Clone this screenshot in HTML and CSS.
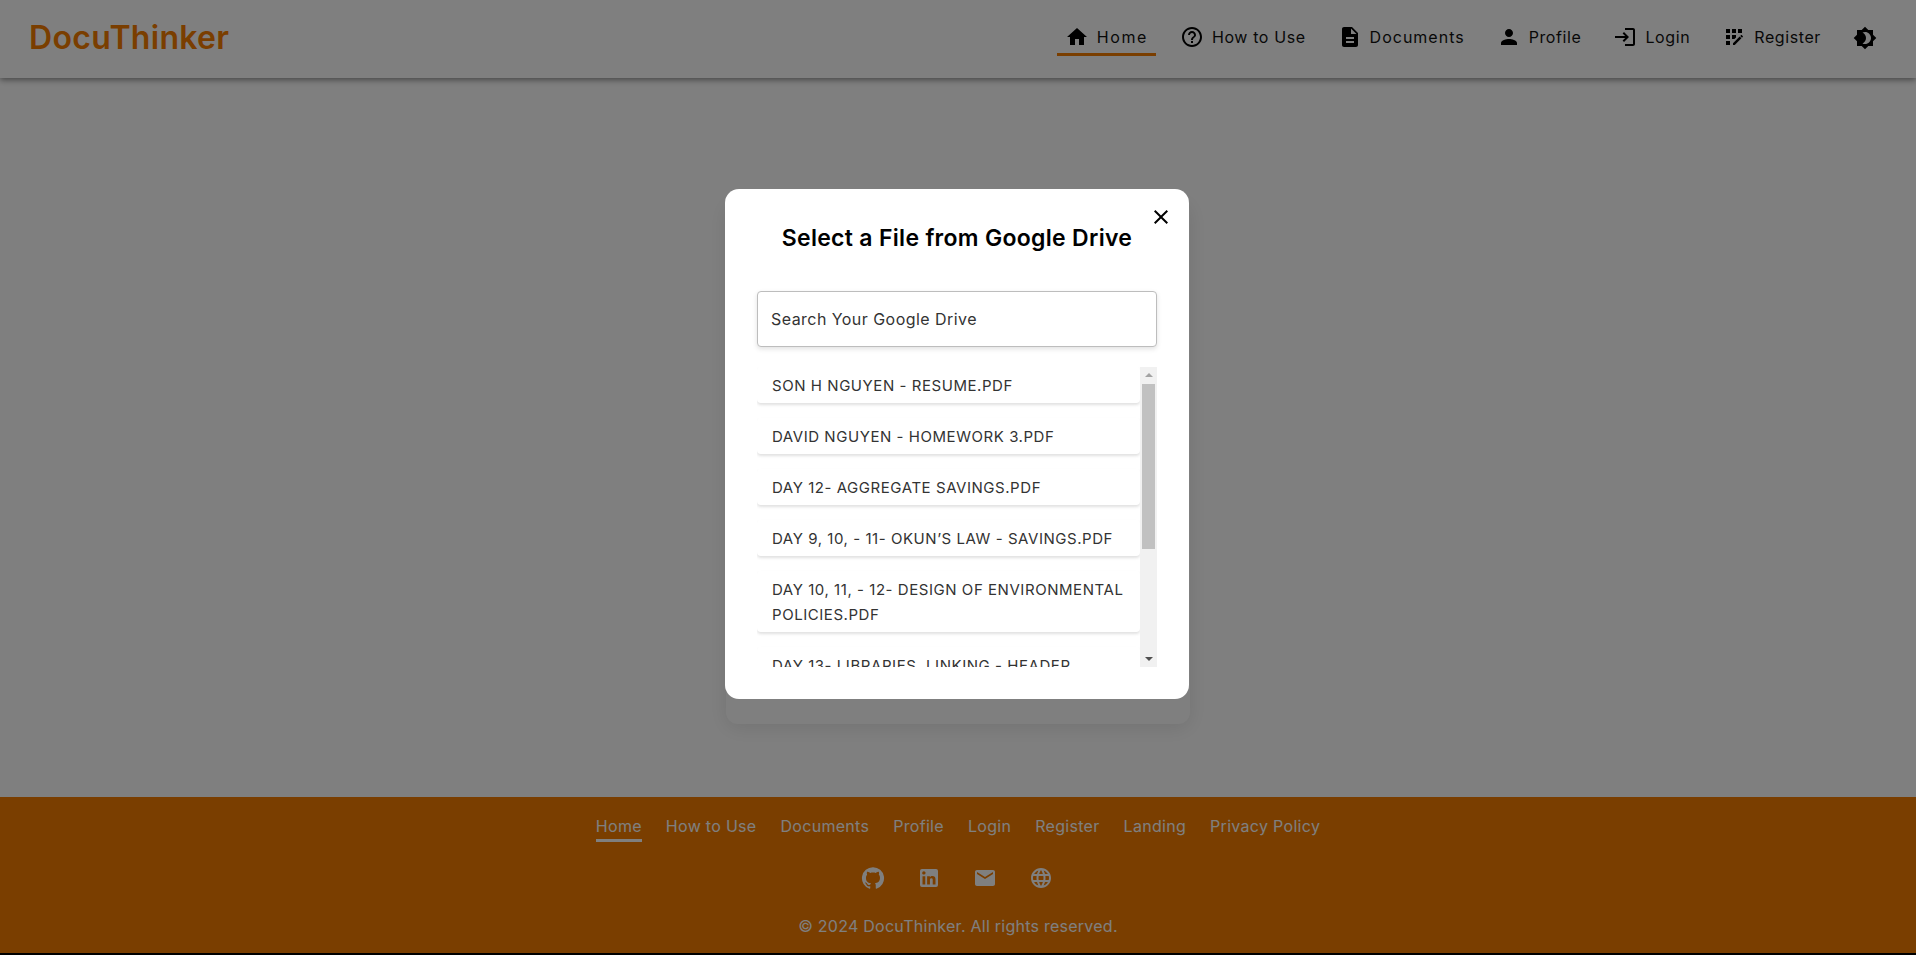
FILE: index.html
```html
<!DOCTYPE html>
<html lang="en">
<head>
    <meta charset="UTF-8">
    <title>DocuThinker</title>
    <link rel="stylesheet" href="styles.css">
</head>
<body>
    <div class="page">
        <header class="navbar">
            <div class="logo">DocuThinker</div>
            <nav class="nav-links">
                <a class="nav-item active"><svg viewBox="0 0 24 24"><path d="M10 20v-6h4v6h5v-8h3L12 3 2 12h3v8z"/></svg><span>Home</span></a>
                <a class="nav-item"><svg viewBox="0 0 24 24"><path d="M11 18h2v-2h-2v2zm1-16C6.48 2 2 6.48 2 12s4.48 10 10 10 10-4.48 10-10S17.52 2 12 2zm0 18c-4.41 0-8-3.59-8-8s3.59-8 8-8 8 3.59 8 8-3.59 8-8 8zm0-14c-2.21 0-4 1.79-4 4h2c0-1.1.9-2 2-2s2 .9 2 2c0 2-3 1.75-3 5h2c0-2.25 3-2.5 3-5 0-2.21-1.79-4-4-4z"/></svg><span>How to Use</span></a>
                <a class="nav-item wide"><svg viewBox="0 0 24 24"><path d="M14 2H6c-1.1 0-1.99.9-1.99 2L4 20c0 1.1.89 2 1.99 2H18c1.1 0 2-.9 2-2V8l-6-6zm2 16H8v-2h8v2zm0-4H8v-2h8v2zm-3-5V3.5L18.5 9H13z"/></svg><span>Documents</span></a>
                <a class="nav-item"><svg viewBox="0 0 24 24"><path d="M12 12c2.21 0 4-1.79 4-4s-1.79-4-4-4-4 1.79-4 4 1.79 4 4 4zm0 2c-2.67 0-8 1.34-8 4v2h16v-2c0-2.66-5.33-4-8-4z"/></svg><span>Profile</span></a>
                <a class="nav-item"><svg viewBox="0 0 24 24"><path d="M11 7 9.6 8.4l2.6 2.6H2v2h10.2l-2.6 2.6L11 17l5-5-5-5zm9 12h-8v2h8c1.1 0 2-.9 2-2V5c0-1.1-.9-2-2-2h-8v2h8v14z"/></svg><span>Login</span></a>
                <a class="nav-item"><svg viewBox="0 0 24 24"><path d="M10 4h4v4h-4zM4 16h4v4H4zm0-6h4v4H4zm0-6h4v4H4zm10 8.42V10h-4v4h2.42zm6.88-1.13-1.17-1.17c-.16-.16-.42-.16-.58 0l-.88.88L20 12.75l.88-.88c.16-.16.16-.42 0-.58zM11 18.25V20h1.75l6.67-6.67-1.75-1.75zM16 4h4v4h-4z"/></svg><span>Register</span></a>
                <a class="theme-toggle"><svg viewBox="0 0 24 24"><path d="M20 8.69V4h-4.69L12 .69 8.69 4H4v4.69L.69 12 4 15.31V20h4.69L12 23.31 15.31 20H20v-4.69L23.31 12 20 8.69zM12 18c-.89 0-1.74-.2-2.5-.55C11.56 16.5 13 14.42 13 12s-1.44-4.5-3.5-5.45C10.26 6.2 11.11 6 12 6c3.31 0 6 2.69 6 6s-2.69 6-6 6z"/></svg></a>
            </nav>
        </header>

        <main class="main">
            <div class="upload-card"></div>
        </main>

        <footer class="footer">
            <div class="footer-links">
                <a class="active">Home</a>
                <a>How to Use</a>
                <a>Documents</a>
                <a>Profile</a>
                <a>Login</a>
                <a>Register</a>
                <a>Landing</a>
                <a>Privacy Policy</a>
            </div>
            <div class="footer-icons">
                <svg viewBox="0 0 24 24"><path d="M12 1.27a11 11 0 00-3.48 21.46c.55.09.73-.28.73-.55v-1.84c-3.03.64-3.67-1.46-3.67-1.46-.55-1.29-1.28-1.65-1.28-1.65-.92-.65.1-.65.1-.65 1.1 0 1.73 1.1 1.73 1.1.92 1.65 2.57 1.2 3.21.92a2 2 0 01.64-1.47c-2.47-.27-5.04-1.19-5.04-5.5 0-1.1.46-2.1 1.2-2.84a3.76 3.76 0 010-2.93s.91-.28 3.11 1.1c1.8-.49 3.7-.49 5.5 0 2.1-1.38 3.02-1.1 3.02-1.1a3.76 3.76 0 010 2.93c.83.74 1.2 1.74 1.2 2.94 0 4.21-2.57 5.13-5.04 5.4.45.37.82.92.82 2.02v3.03c0 .27.1.64.73.55A11 11 0 0012 1.27"/></svg>
                <svg viewBox="0 0 24 24"><path d="M19 3a2 2 0 0 1 2 2v14a2 2 0 0 1-2 2H5a2 2 0 0 1-2-2V5a2 2 0 0 1 2-2h14m-.5 15.5v-5.3a3.26 3.26 0 0 0-3.26-3.26c-.85 0-1.84.52-2.32 1.3v-1.11h-2.79v8.37h2.79v-4.93c0-.77.62-1.4 1.39-1.4a1.4 1.4 0 0 1 1.4 1.4v4.93h2.79M6.88 8.56a1.68 1.68 0 0 0 1.68-1.68c0-.93-.75-1.69-1.68-1.69a1.69 1.69 0 0 0-1.69 1.69c0 .93.76 1.68 1.69 1.68m1.39 9.94v-8.37H5.5v8.37h2.77z"/></svg>
                <svg viewBox="0 0 24 24"><path d="M20 4H4c-1.1 0-1.99.9-1.99 2L2 18c0 1.1.9 2 2 2h16c1.1 0 2-.9 2-2V6c0-1.1-.9-2-2-2zm0 4-8 5-8-5V6l8 5 8-5v2z"/></svg>
                <svg viewBox="0 0 24 24"><path d="M11.99 2C6.47 2 2 6.48 2 12s4.47 10 9.99 10C17.52 22 22 17.52 22 12S17.52 2 11.99 2zm6.93 6h-2.95c-.32-1.25-.78-2.45-1.38-3.56 1.84.63 3.37 1.91 4.33 3.56zM12 4.04c.83 1.2 1.48 2.53 1.91 3.96h-3.82c.43-1.43 1.08-2.76 1.91-3.96zM4.26 14C4.1 13.36 4 12.69 4 12s.1-1.36.26-2h3.38c-.08.66-.14 1.32-.14 2 0 .68.06 1.34.14 2H4.26zm.82 2h2.95c.32 1.25.78 2.45 1.38 3.56-1.84-.63-3.37-1.9-4.33-3.56zm2.95-8H5.08c.96-1.66 2.49-2.93 4.33-3.56C8.81 5.55 8.35 6.75 8.03 8zM12 19.96c-.83-1.2-1.48-2.53-1.91-3.96h3.82c-.43 1.43-1.08 2.76-1.91 3.96zM14.34 14H9.66c-.09-.66-.16-1.32-.16-2 0-.68.07-1.35.16-2h4.68c.09.65.16 1.32.16 2 0 .68-.07 1.34-.16 2zm.25 5.56c.6-1.11 1.06-2.31 1.38-3.56h2.95c-.96 1.65-2.49 2.93-4.33 3.56zM16.36 14c.08-.66.14-1.32.14-2 0-.68-.06-1.34-.14-2h3.38c.16.64.26 1.31.26 2s-.1 1.36-.26 2h-3.38z"/></svg>
            </div>
            <div class="copyright">© 2024 DocuThinker. All rights reserved.</div>
        </footer>
    </div>

    <div class="backdrop"></div>

    <div class="modal">
        <button class="modal-close"><svg viewBox="0 0 24 24"><path d="M19 6.41 17.59 5 12 10.59 6.41 5 5 6.41 10.59 12 5 17.59 6.41 19 12 13.41 17.59 19 19 17.59 13.41 12z"/></svg></button>
        <h2 class="modal-title">Select a File from Google Drive</h2>
        <input class="search-box" type="text" placeholder="Search Your Google Drive">
        <div class="file-panel">
            <ul class="file-list">
                <li>Son H Nguyen - Resume.pdf</li>
                <li>David Nguyen - Homework 3.pdf</li>
                <li>Day 12- Aggregate Savings.pdf</li>
                <li>Day 9, 10, - 11- Okun’s Law - Savings.pdf</li>
                <li>Day 10, 11, - 12- Design of Environmental Policies.pdf</li>
                <li>Day 13- Libraries, Linking - Header Files.pdf</li>
            </ul>
            <div class="scroll-track">
                <span class="arrow-up"></span>
                <span class="scroll-thumb"></span>
                <span class="arrow-down"></span>
            </div>
        </div>
    </div>
</body>
</html>
```

FILE: styles.css
```css
* {
    box-sizing: border-box;
}
html {
    background: #000;
}
body {
    margin: 0;
    font-family: Inter, "Open Sans", sans-serif;
    color: #000;
}
.page {
    height: 953px;
    display: flex;
    flex-direction: column;
    background: white;
    overflow: hidden;
}

/* navbar */
.navbar {
    height: 78px;
    flex-shrink: 0;
    display: flex;
    align-items: center;
    justify-content: space-between;
    padding: 0 39px 3px 29px;
    background: white;
    box-shadow: 0 2px 6px rgba(0,0,0,0.45);
    position: relative;
}
.logo {
    font-size: 32px;
    font-weight: 600;
    letter-spacing: 0.3px;
    color: #f57c00;
}
.nav-links {
    display: flex;
    align-items: center;
    gap: 16px;
}
.nav-item {
    display: flex;
    align-items: center;
    gap: 8px;
    padding: 6px 8px 4px;
    border-bottom: 3px solid transparent;
    font-size: 16px;
    letter-spacing: 0.6px;
    color: #111;
}
.nav-item.wide {
    letter-spacing: 1px;
}
.nav-item svg, .theme-toggle svg {
    width: 24px;
    height: 24px;
    display: block;
}
.nav-item.active {
    letter-spacing: 1.6px;
    border-bottom-color: #f57c00;
}
.theme-toggle {
    margin-left: 8px;
}

/* main area */
.main {
    flex: 1;
    display: flex;
    justify-content: center;
    align-items: flex-start;
    padding-top: 122px;
}
.upload-card {
    width: 464px;
    height: 524px;
    border-radius: 12px;
    background: white;
    box-shadow: 0 4px 20px rgba(0,0,0,0.1);
}

/* footer */
.footer {
    height: 156px;
    flex-shrink: 0;
    display: flex;
    flex-direction: column;
    align-items: center;
    background: #f57c00;
    color: white;
    padding-top: 16px;
}
.footer-links {
    display: flex;
    gap: 24px;
    font-size: 16px;
    letter-spacing: 0.3px;
}
.footer-links a {
    line-height: 26px;
    border-bottom: 3px solid transparent;
}
.footer-links a.active {
    border-bottom-color: white;
}
.footer-icons {
    display: flex;
    gap: 32px;
    margin-top: 24px;
    padding-right: 2px;
}
.footer-icons svg {
    width: 24px;
    height: 24px;
    fill: white;
}
.copyright {
    margin-top: 26px;
    font-size: 16px;
    letter-spacing: 0.25px;
}

/* google drive modal */
.backdrop {
    position: fixed;
    inset: 0;
    background: rgba(0,0,0,0.5);
}
.modal {
    position: absolute;
    top: 189px;
    left: 725px;
    width: 464px;
    height: 510px;
    padding: 32px;
    background: white;
    border-radius: 14px;
}
.modal-close {
    position: absolute;
    top: 16px;
    right: 16px;
    width: 24px;
    height: 24px;
    padding: 0;
    border: none;
    background: none;
}
.modal-close svg {
    display: block;
}
.modal-title {
    margin: 0;
    text-align: center;
    font-size: 23px;
    line-height: 34px;
    font-weight: 600;
    letter-spacing: 0.3px;
}
.search-box {
    display: block;
    width: 100%;
    height: 56px;
    margin-top: 36px;
    padding: 0 13px 1px;
    border: 1px solid #bdbdbd;
    border-radius: 4px;
    font-family: inherit;
    font-size: 16px;
    box-shadow: 0 2px 5px rgba(0,0,0,0.12);
}
.search-box::placeholder {
    color: #333;
    opacity: 1;
    letter-spacing: 0.45px;
}
.file-panel {
    display: flex;
    height: 300px;
    margin-top: 20px;
}
.file-list {
    flex: 1;
    margin: 0;
    padding: 0;
    list-style: none;
    overflow: hidden;
}
.file-list li {
    padding: 6px 15px 5px;
    margin-bottom: 15px;
    border-radius: 4px;
    line-height: 25px;
    font-size: 15px;
    letter-spacing: 0.55px;
    text-transform: uppercase;
    color: #333;
    box-shadow: 0 2px 3px rgba(0,0,0,0.12);
}
.scroll-track {
    width: 17px;
    display: flex;
    flex-direction: column;
    align-items: center;
    background: #f1f1f1;
    position: relative;
}
.scroll-thumb {
    position: absolute;
    top: 17px;
    width: 13px;
    height: 165px;
    background: #c1c1c1;
}
.arrow-up, .arrow-down {
    position: absolute;
    width: 0;
    height: 0;
    border-left: 4px solid transparent;
    border-right: 4px solid transparent;
}
.arrow-up {
    top: 6px;
    border-bottom: 4px solid #a3a3a3;
}
.arrow-down {
    bottom: 6px;
    border-top: 4px solid #505050;
}
```
